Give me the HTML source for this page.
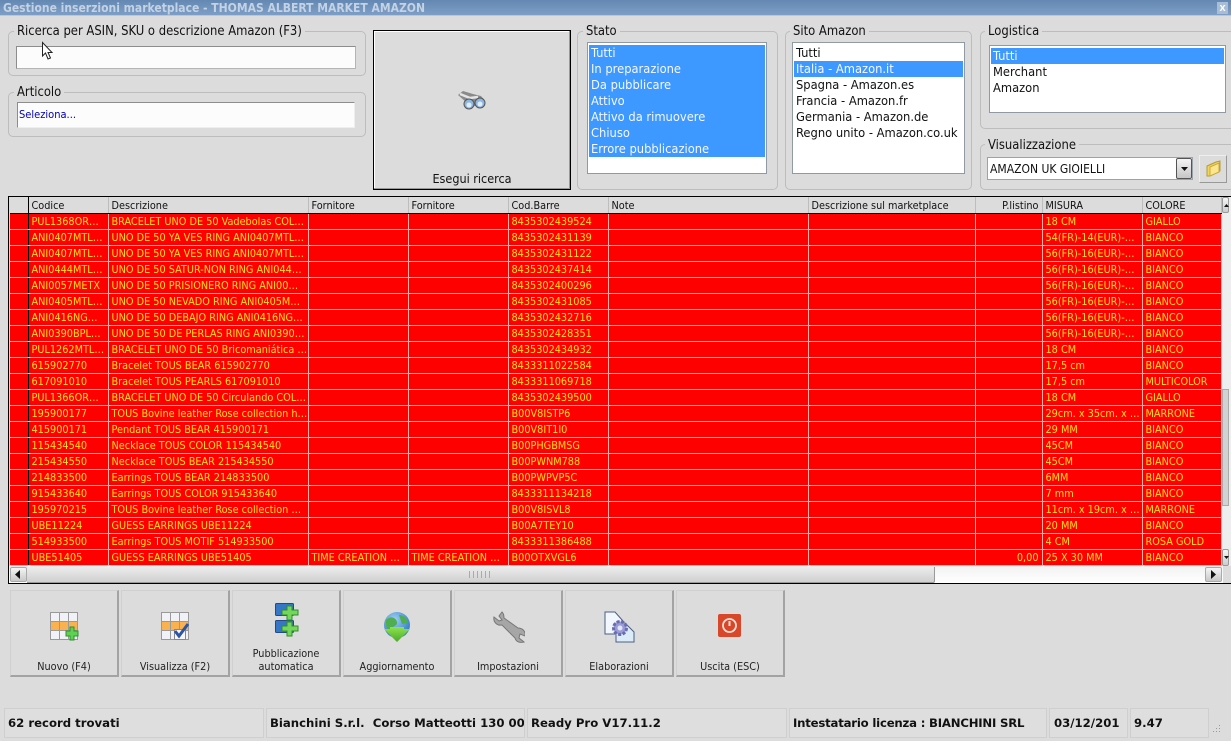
<!DOCTYPE html>
<html lang="it"><head><meta charset="utf-8"><title>Gestione inserzioni marketplace</title>
<style>
*{box-sizing:border-box}
html,body{margin:0;padding:0;width:1231px;height:741px;overflow:hidden;background:#dcdcdc}
body{position:relative;font-family:"DejaVu Sans Condensed","Liberation Sans",sans-serif;font-size:12px;color:#111}
.a{position:absolute}
#title{left:0;top:0;width:1231px;height:16px;background:linear-gradient(#6488b2,#7d9ec6);color:#c3d2e4;font-weight:bold;font-size:12px;line-height:16px;padding-left:3px;white-space:nowrap;border-bottom:1px solid #b8c8da}
.grp{border:1px solid #bdbdbd;border-radius:5px}
.lg{position:absolute;background:#dcdcdc;padding:0 3px;font-size:12.9px;line-height:14px;color:#111;white-space:nowrap}
.inp{background:#fcfcfc;border:1px solid #8d8d8d;border-right-color:#b5b5b5;border-bottom-color:#b5b5b5}
.list{background:#fff;border:1px solid #8f9aa5;font-size:12.8px;line-height:15px;overflow:hidden;white-space:nowrap}
.list div{padding:1px 0 0 2px;height:16px}
.sel{background:#3d98ff;color:#f4f8ff}
#grid{left:8px;top:196px;width:1223px;height:388px;background:#dcdcdc;border-top:1px solid #000;border-bottom:1px solid #000;border-left:1px solid #000}
table{border-collapse:collapse;table-layout:fixed;width:1211px;position:absolute;left:1px;top:0}
td,th{height:16px;padding:1px 0 0 3px;font-size:10.8px;font-weight:normal;overflow:hidden;white-space:nowrap;line-height:14px;text-align:left}
th{height:16px;padding-top:2px;line-height:13px;background:#dcdcdc;color:#111;border-right:1px solid #bdbdbd;border-bottom:1px solid #000}
td{background:#fe0000;color:#ffe020;border-right:1px solid #ffb0a8;border-bottom:1px solid #ffb0a8}
td.i{border-right:1px solid #000;padding:0}
th.i{border-right:1px solid #000;padding:0}
.r{text-align:right;padding-right:3px}
.btn{top:590px;width:109px;height:87px;background:#dcdcdc;border:1px solid #e9e9e9;border-right:2px solid #a3a3a3;border-bottom:2px solid #a3a3a3;border-top-color:#d0d0d0;border-left-color:#d0d0d0;font-size:10.8px;color:#222;text-align:center}
.btn span{position:absolute;left:0;right:0;bottom:2px;line-height:13px}
.btn svg{position:absolute}
.st{top:708px;height:30px;border:1px solid #cfcfcf;background:#dedede;font-family:"DejaVu Sans","Liberation Sans",sans-serif;font-weight:bold;font-size:11.7px;line-height:29px;padding-left:3px;white-space:nowrap;overflow:hidden;color:#111}
</style></head><body>
<div class="a" id="title">Gestione inserzioni marketplace - THOMAS ALBERT MARKET AMAZON</div>
<div class="a" style="left:1217px;top:2px;width:11px;height:12px;background:#a9bdd6;color:#fff;font:bold 11px/12px 'Liberation Sans',sans-serif;text-align:center">x</div>

<div class="a grp" style="left:8px;top:31px;width:358px;height:45px"></div>
<div class="lg" style="left:14px;top:25px">Ricerca per ASIN, SKU o descrizione Amazon (F3)</div>
<div class="a inp" style="left:16px;top:46px;width:340px;height:23px"></div>
<svg class="a" style="left:41px;top:41px" width="14" height="20" viewBox="0 0 14 20"><path d="M1.5 1.5V15l3-3 2.500 6 2.500-1-2.500-5.500h4z" fill="#fff" stroke="#222" stroke-width="1"/></svg>

<div class="a grp" style="left:8px;top:92px;width:358px;height:45px"></div>
<div class="lg" style="left:14px;top:86px">Articolo</div>
<div class="a inp" style="left:17px;top:102px;width:338px;height:26px;color:#0000b0;font-size:11px;line-height:24px;padding-left:1px;border-bottom-color:#eee;border-right-color:#eee">Seleziona...</div>

<div class="a" style="left:373px;top:30px;width:198px;height:160px;background:#dcdcdc;border:1px solid #000;box-shadow:inset -1px -1px 0 #999,inset 1px 1px 0 #fff"></div>
<svg class="a" style="left:456px;top:89px" width="32" height="24" viewBox="0 0 32 24">
<path d="M2 6l5-4 10 3 8 2 4 5-3 6-5-2-5 2-6-5z" fill="#8a8a8a"/>
<path d="M4 5l10 4 8-1" stroke="#e4e4e4" stroke-width="2.500" fill="none"/>
<circle cx="13" cy="15" r="5" fill="#8fb6e0" stroke="#555"/><circle cx="24" cy="14" r="5" fill="#8fb6e0" stroke="#555"/>
<circle cx="13" cy="16" r="2.500" fill="#dfeeff"/><circle cx="24" cy="15" r="2.500" fill="#dfeeff"/></svg>
<div class="a" style="left:373px;top:171px;width:198px;text-align:center;font-size:12.500px;line-height:16px">Esegui ricerca</div>

<div class="a grp" style="left:577px;top:31px;width:201px;height:159px"></div>
<div class="lg" style="left:583px;top:25px">Stato</div>
<div class="a list" style="left:587px;top:42px;width:180px;height:132px;padding:2px 1px 0 1px"><div class="sel">Tutti</div><div class="sel">In preparazione</div><div class="sel">Da pubblicare</div><div class="sel">Attivo</div><div class="sel">Attivo da rimuovere</div><div class="sel">Chiuso</div><div class="sel">Errore pubblicazione</div></div>

<div class="a grp" style="left:785px;top:31px;width:187px;height:159px"></div>
<div class="lg" style="left:790px;top:25px">Sito Amazon</div>
<div class="a list" style="left:792px;top:42px;width:173px;height:132px;padding:2px 1px 0 1px"><div>Tutti</div><div class="sel">Italia - Amazon.it</div><div>Spagna - Amazon.es</div><div>Francia - Amazon.fr</div><div>Germania - Amazon.de</div><div>Regno unito - Amazon.co.uk</div></div>

<div class="a grp" style="left:980px;top:31px;width:260px;height:98px"></div>
<div class="lg" style="left:985px;top:25px">Logistica</div>
<div class="a list" style="left:989px;top:45px;width:237px;height:68px;padding:2px 1px 0 1px"><div class="sel">Tutti</div><div>Merchant</div><div>Amazon</div></div>

<div class="a grp" style="left:980px;top:144px;width:260px;height:46px"></div>
<div class="lg" style="left:985px;top:139px">Visualizzazione</div>
<div class="a" style="left:987px;top:157px;width:206px;height:23px;background:#fff;border:1px solid #9aa2aa;font-size:12px;line-height:22px;padding-left:2px">AMAZON UK GIOIELLI</div>
<div class="a" style="left:1176px;top:158px;width:16px;height:21px;background:linear-gradient(#f4f4f4,#c6c6c6);border:1px solid #555;border-radius:2px"></div>
<svg class="a" style="left:1180px;top:166px" width="9" height="6"><path d="M1 1h7L4.500 5z" fill="#111"/></svg>
<div class="a" style="left:1199px;top:155px;width:28px;height:28px;background:#dcdcdc;border:1px solid #eee;border-right-color:#999;border-bottom-color:#999"></div>
<svg class="a" style="left:1205px;top:160px" width="17" height="18" viewBox="0 0 17 18"><path d="M2 6l9-4 4-1v10l-10 5H2z" fill="#f2d35c" stroke="#b59a3c"/><path d="M5 7l9-4v9l-9 4z" fill="#fbe68c" stroke="#c9a93f"/></svg>

<div class="a" id="grid">
<table>
<colgroup><col style="width:18px"><col style="width:80px"><col style="width:200px"><col style="width:100px"><col style="width:100px"><col style="width:100px"><col style="width:200px"><col style="width:167px"><col style="width:67px"><col style="width:100px"><col style="width:79px"></colgroup>
<tr><th class="i"></th><th>Codice</th><th>Descrizione</th><th>Fornitore</th><th>Fornitore</th><th>Cod.Barre</th><th>Note</th><th>Descrizione sul marketplace</th><th class="r">P.listino</th><th>MISURA</th><th>COLORE</th></tr>
<tr><td class="i"></td><td>PUL1368OR…</td><td>BRACELET UNO DE 50 Vadebolas COL…</td><td></td><td></td><td>8435302439524</td><td></td><td></td><td></td><td>18 CM</td><td>GIALLO</td></tr>
<tr><td class="i"></td><td>ANI0407MTL…</td><td>UNO DE 50 YA VES RING ANI0407MTL…</td><td></td><td></td><td>8435302431139</td><td></td><td></td><td></td><td>54(FR)-14(EUR)-…</td><td>BIANCO</td></tr>
<tr><td class="i"></td><td>ANI0407MTL…</td><td>UNO DE 50 YA VES RING ANI0407MTL…</td><td></td><td></td><td>8435302431122</td><td></td><td></td><td></td><td>56(FR)-16(EUR)-…</td><td>BIANCO</td></tr>
<tr><td class="i"></td><td>ANI0444MTL…</td><td>UNO DE 50 SATUR-NON RING ANI044…</td><td></td><td></td><td>8435302437414</td><td></td><td></td><td></td><td>56(FR)-16(EUR)-…</td><td>BIANCO</td></tr>
<tr><td class="i"></td><td>ANI0057METX</td><td>UNO DE 50 PRISIONERO RING ANI00…</td><td></td><td></td><td>8435302400296</td><td></td><td></td><td></td><td>56(FR)-16(EUR)-…</td><td>BIANCO</td></tr>
<tr><td class="i"></td><td>ANI0405MTL…</td><td>UNO DE 50 NEVADO RING ANI0405M…</td><td></td><td></td><td>8435302431085</td><td></td><td></td><td></td><td>56(FR)-16(EUR)-…</td><td>BIANCO</td></tr>
<tr><td class="i"></td><td>ANI0416NG…</td><td>UNO DE 50 DEBAJO RING ANI0416NG…</td><td></td><td></td><td>8435302432716</td><td></td><td></td><td></td><td>56(FR)-16(EUR)-…</td><td>BIANCO</td></tr>
<tr><td class="i"></td><td>ANI0390BPL…</td><td>UNO DE 50 DE PERLAS RING ANI0390…</td><td></td><td></td><td>8435302428351</td><td></td><td></td><td></td><td>56(FR)-16(EUR)-…</td><td>BIANCO</td></tr>
<tr><td class="i"></td><td>PUL1262MTL…</td><td>BRACELET UNO DE 50 Bricomaniática …</td><td></td><td></td><td>8435302434932</td><td></td><td></td><td></td><td>18 CM</td><td>BIANCO</td></tr>
<tr><td class="i"></td><td>615902770</td><td>Bracelet TOUS BEAR 615902770</td><td></td><td></td><td>8433311022584</td><td></td><td></td><td></td><td>17,5 cm</td><td>BIANCO</td></tr>
<tr><td class="i"></td><td>617091010</td><td>Bracelet TOUS PEARLS 617091010</td><td></td><td></td><td>8433311069718</td><td></td><td></td><td></td><td>17,5 cm</td><td>MULTICOLOR</td></tr>
<tr><td class="i"></td><td>PUL1366OR…</td><td>BRACELET UNO DE 50 Circulando COL…</td><td></td><td></td><td>8435302439500</td><td></td><td></td><td></td><td>18 CM</td><td>GIALLO</td></tr>
<tr><td class="i"></td><td>195900177</td><td>TOUS Bovine leather Rose collection h…</td><td></td><td></td><td>B00V8ISTP6</td><td></td><td></td><td></td><td>29cm. x 35cm. x …</td><td>MARRONE</td></tr>
<tr><td class="i"></td><td>415900171</td><td>Pendant TOUS BEAR 415900171</td><td></td><td></td><td>B00V8IT1I0</td><td></td><td></td><td></td><td>29 MM</td><td>BIANCO</td></tr>
<tr><td class="i"></td><td>115434540</td><td>Necklace TOUS COLOR 115434540</td><td></td><td></td><td>B00PHGBMSG</td><td></td><td></td><td></td><td>45CM</td><td>BIANCO</td></tr>
<tr><td class="i"></td><td>215434550</td><td>Necklace TOUS BEAR 215434550</td><td></td><td></td><td>B00PWNM788</td><td></td><td></td><td></td><td>45CM</td><td>BIANCO</td></tr>
<tr><td class="i"></td><td>214833500</td><td>Earrings TOUS BEAR 214833500</td><td></td><td></td><td>B00PWPVP5C</td><td></td><td></td><td></td><td>6MM</td><td>BIANCO</td></tr>
<tr><td class="i"></td><td>915433640</td><td>Earrings TOUS COLOR 915433640</td><td></td><td></td><td>8433311134218</td><td></td><td></td><td></td><td>7 mm</td><td>BIANCO</td></tr>
<tr><td class="i"></td><td>195970215</td><td>TOUS Bovine leather Rose collection …</td><td></td><td></td><td>B00V8ISVL8</td><td></td><td></td><td></td><td>11cm. x 19cm. x …</td><td>MARRONE</td></tr>
<tr><td class="i"></td><td>UBE11224</td><td>GUESS EARRINGS UBE11224</td><td></td><td></td><td>B00A7TEY10</td><td></td><td></td><td></td><td>20 MM</td><td>BIANCO</td></tr>
<tr><td class="i"></td><td>514933500</td><td>Earrings TOUS MOTIF 514933500</td><td></td><td></td><td>8433311386488</td><td></td><td></td><td></td><td>4 CM</td><td>ROSA GOLD</td></tr>
<tr><td class="i"></td><td>UBE51405</td><td>GUESS EARRINGS UBE51405</td><td>TIME CREATION …</td><td>TIME CREATION …</td><td>B00OTXVGL6</td><td></td><td></td><td class="r">0,00</td><td>25 X 30 MM</td><td>BIANCO</td></tr>
</table>
</div>
<div class="a" style="left:9px;top:566px;width:1214px;height:17px;background:linear-gradient(#f2f2f2,#fff)"></div>
<div class="a" style="left:10px;top:567px;width:17px;height:15px;background:linear-gradient(#f5f5f5,#c8c8c8);border:1px solid #aaa;border-radius:2px"></div>
<svg class="a" style="left:15px;top:570px" width="6" height="9"><path d="M5 0v9L0 4.500z" fill="#111"/></svg>
<div class="a" style="left:27px;top:567px;width:908px;height:16px;background:linear-gradient(#ececec,#d0d0d0);border-right:1px solid #999;border-bottom:1px solid #999;border-radius:0 0 2px 0"></div>
<div class="a" style="left:469px;top:571px;width:23px;height:7px;background:repeating-linear-gradient(90deg,#aaa 0 1px,transparent 1px 4px)"></div>
<div class="a" style="left:1205px;top:567px;width:17px;height:15px;background:linear-gradient(#f5f5f5,#c8c8c8);border:1px solid #aaa;border-radius:2px"></div>
<svg class="a" style="left:1211px;top:570px" width="6" height="9"><path d="M0 0v9l5-4.500z" fill="#111"/></svg>
<div class="a" style="left:1222px;top:197px;width:9px;height:369px;background:#eee"></div>
<div class="a" style="left:1222px;top:197px;width:7px;height:16px;background:linear-gradient(#f5f5f5,#ccc);border:1px solid #999;border-radius:2px"></div>
<svg class="a" style="left:1224px;top:204px" width="5" height="3"><path d="M2.500 0L5 3H0z" fill="#111"/></svg>
<div class="a" style="left:1222px;top:389px;width:7px;height:117px;background:#d2d2d2;border:1px solid #aaa"></div>
<div class="a" style="left:1222px;top:549px;width:7px;height:17px;background:linear-gradient(#f5f5f5,#ccc);border:1px solid #999;border-radius:2px"></div>
<svg class="a" style="left:1224px;top:556px" width="5" height="3"><path d="M0 0h5L2.500 3z" fill="#111"/></svg>

<div class="a btn" style="left:10px"><svg style="left:39px;top:21px" width="30" height="30" viewBox="0 0 30 30"><rect x=".5" y=".5" width="27" height="27" fill="#f0f2f8" stroke="#999"/><rect x="1" y="10" width="26" height="9" fill="#f9b24f"/><path d="M9.500 0v27M18.500 0v27M0 9.500h27M0 18.500h27" stroke="#9a9a9a"/><path d="M20 15h4v4h4v5h-4v4h-4v-4h-4v-5h4z" fill="#5fd150" stroke="#2f8f2f"/></svg><span>Nuovo (F4)</span></div>
<div class="a btn" style="left:121px"><svg style="left:39px;top:21px" width="30" height="30" viewBox="0 0 30 30"><rect x=".5" y=".5" width="27" height="27" fill="#f0f2f8" stroke="#999"/><rect x="1" y="10" width="26" height="9" fill="#f9b24f"/><path d="M9.500 0v27M18.500 0v27M0 9.500h27M0 18.500h27" stroke="#9a9a9a"/><rect x="13.500" y="17.500" width="11" height="10" fill="#f6f6f6" stroke="#888"/><path d="M14 19l4 5 9-12" fill="none" stroke="#2c55a4" stroke-width="3"/></svg><span>Visualizza (F2)</span></div>
<div class="a btn" style="left:232px"><svg style="left:42px;top:12px" width="26" height="34" viewBox="0 0 26 34"><rect x=".5" y=".5" width="18" height="12" rx="1" fill="#3576c6" stroke="#244a86"/><rect x=".5" y="17.500" width="18" height="12" rx="1" fill="#3576c6" stroke="#244a86"/><path d="M12 3h5v4h6v5h-6v5h-5v-5H7V7h5z" fill="#74d65a" stroke="#2f8f2f"/><path d="M12 19h5v4h6v5h-6v5h-5v-5H7v-5h5z" fill="#74d65a" stroke="#2f8f2f"/></svg><span>Pubblicazione<br>automatica</span></div>
<div class="a btn" style="left:343px"><svg style="left:39px;top:21px" width="28" height="30" viewBox="0 0 28 30"><defs><radialGradient id="g" cx=".4" cy=".3" r=".8"><stop offset="0" stop-color="#9ed0f5"/><stop offset="1" stop-color="#1f6fbf"/></radialGradient><linearGradient id="h" x1="0" y1="0" x2="0" y2="1"><stop offset="0" stop-color="#8fe34e"/><stop offset="1" stop-color="#4aa82a"/></linearGradient></defs><circle cx="14" cy="13" r="13" fill="url(#g)"/><path d="M3 8c5-5 10-2 11 2s-5 4-7 8-5-6-4-10zM16 3c5 0 9 4 9 8l-6 1z" fill="#4fae4f"/><path d="M1 17l6 0 0-2 14 0 0 2 6 0L14 30z" fill="url(#h)"/></svg><span>Aggiornamento</span></div>
<div class="a btn" style="left:454px"><svg style="left:38px;top:20px" width="32" height="32" viewBox="0 0 32 32"><path d="M9 1L6 5l3 4-3 1-5-4c-1 5 3 9 8 8l13 13c1 4 5 5 9 4l-5-4 1-4 5 2c1-5-3-8-7-8L11 7c0-3-1-5-2-6z" fill="#a6a6a6" stroke="#777"/></svg><span>Impostazioni</span></div>
<div class="a btn" style="left:565px"><svg style="left:38px;top:20px" width="32" height="32" viewBox="0 0 32 32"><path d="M1 1h10l8 9v13H1z" fill="#f2f6fd" stroke="#4a5f86"/><path d="M12 12h9l9 9v10H12z" fill="#dcebf8" stroke="#4a5f86"/><circle cx="16" cy="17" r="6.500" fill="#9a9cd6" stroke="#6a6cae" stroke-dasharray="3 1.500" stroke-width="3"/><circle cx="16" cy="17" r="2.500" fill="#e3e4f6"/></svg><span>Elaborazioni</span></div>
<div class="a btn" style="left:676px"><svg style="left:41px;top:23px" width="24" height="24" viewBox="0 0 24 24"><rect width="23" height="23" rx="2" fill="#d8472a"/><circle cx="11.500" cy="11.500" r="6.500" fill="none" stroke="#f9e0d8" stroke-width="1.800"/><path d="M11.500 7v5" stroke="#f9e0d8" stroke-width="2"/></svg><span>Uscita (ESC)</span></div>

<div class="a st" style="left:4px;width:260px">62 record trovati</div>
<div class="a st" style="left:266px;width:259px">Bianchini S.r.l.&nbsp; Corso Matteotti 130 000</div>
<div class="a st" style="left:527px;width:260px">Ready Pro V17.11.2</div>
<div class="a st" style="left:789px;width:258px;letter-spacing:-.2px">Intestatario licenza : BIANCHINI SRL</div>
<div class="a st" style="left:1049px;width:79px;padding-left:4px">03/12/201</div>
<div class="a st" style="left:1130px;width:79px">9.47</div>
<svg class="a" style="left:1212px;top:724px" width="10" height="10"><path d="M7 1h1v1H7zM4 4h1v1H4zM7 4h1v1H7zM1 7h1v1H1zM4 7h1v1H4zM7 7h1v1H7z" fill="#999"/></svg>
</body></html>
